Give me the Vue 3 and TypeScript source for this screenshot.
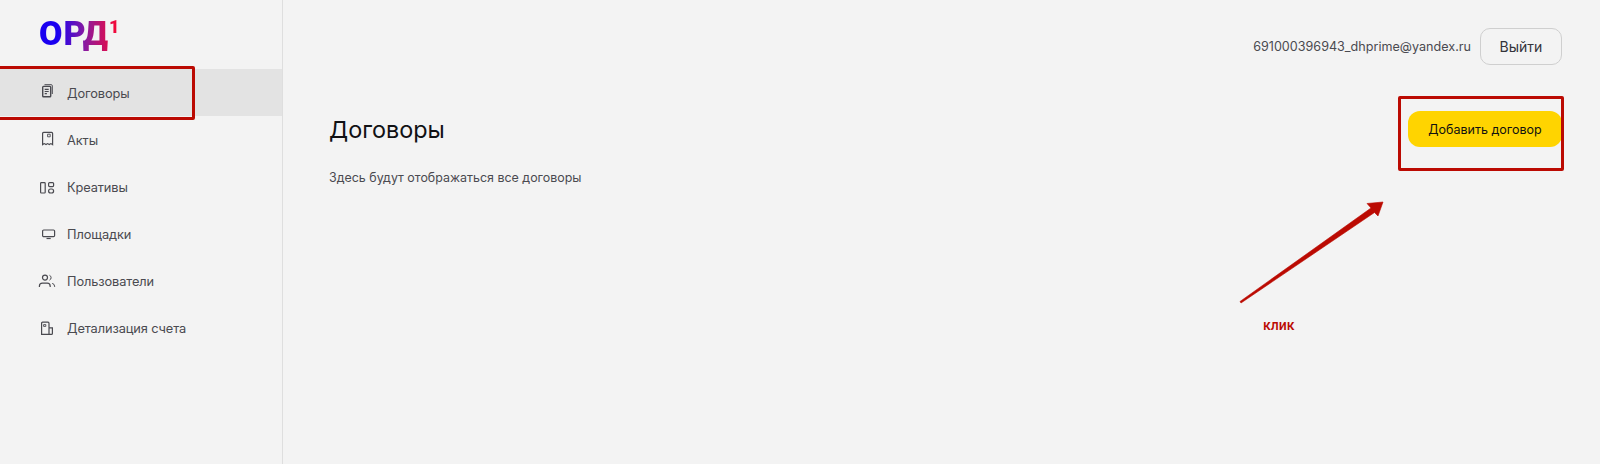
<script setup lang="ts">
type NavItem = { label: string; icon: string; active?: boolean }

const navItems: NavItem[] = [
  { label: 'Договоры', icon: 'contracts', active: true },
  { label: 'Акты', icon: 'acts' },
  { label: 'Креативы', icon: 'creatives' },
  { label: 'Площадки', icon: 'platforms' },
  { label: 'Пользователи', icon: 'users' },
  { label: 'Детализация счета', icon: 'billing' }
]
</script>

<template>
  <div class="page">
    <aside class="sidebar">
      <div class="logo">ОРД<sup class="logo-sup">1</sup></div>
      <nav class="nav">
        <a v-for="item in navItems" :key="item.label" class="nav-item" :class="{ active: item.active }">
          <svg class="nav-icon" width="18" height="18" viewBox="0 0 18 18" fill="none" stroke="currentColor" stroke-width="1.2">
            <template v-if="item.icon === 'contracts'">
              <path d="M6.5 .7h6.8a1 1 0 0 1 1 1V10" stroke-width="1" />
              <rect x="4.7" y="2.4" width="8" height="10.4" rx=".8" stroke-width="1.4" />
              <path d="M6.7 5.4h4M6.7 7.5h4M6.7 9.6h2.2" />
            </template>
            <template v-else-if="item.icon === 'acts'">
              <path d="M4.6 13.6V2.4a1 1 0 0 1 1-1h8a1 1 0 0 1 1 1v11.2l-1.7-1-1.6 1-1.7-1-1.6 1-1.7-1z" />
              <path d="M9.6 3.2h2.6v2.6H9.6z" stroke-width=".9" />
            </template>
            <template v-else-if="item.icon === 'creatives'">
              <rect x="2.6" y="4.6" width="4.6" height="10.4" rx=".8" />
              <rect x="10.6" y="4.6" width="5" height="4" rx="1" />
              <rect x="10.6" y="11" width="5" height="4" rx="2" />
            </template>
            <template v-else-if="item.icon === 'platforms'">
              <rect x="4.6" y="5" width="12" height="6.6" rx="1.1" />
              <path d="M8.5 13.5h4.2" />
            </template>
            <template v-else-if="item.icon === 'users'">
              <circle cx="7" cy="5.6" r="2.5" />
              <path d="M1.4 15v-.8A3 3 0 0 1 4.4 11.200h4.800a3 3 0 0 1 3 3v.8" />
              <path d="M11.500 3.300a2.600 2.600 0 0 1 0 4.800M14.200 11.400a3 3 0 0 1 2.400 2.800v.8" stroke-width="1" />
            </template>
            <template v-else>
              <path d="M3.600 14.400V3.200a1 1 0 0 1 1-1h5.400a1 1 0 0 1 1 1v11.200zM3.600 14.400h9.800a1 1 0 0 0 1-1V7.800H11" />
              <path d="M5.600 4.600h2.200v1.800H5.600z" stroke-width=".9" />
            </template>
          </svg>
          <span>{{ item.label }}</span>
        </a>
      </nav>
    </aside>

    <main class="main">
      <header class="topbar">
        <span class="email">691000396943_dhprime@yandex.ru</span>
        <button class="btn-logout">Выйти</button>
      </header>
      <div class="title-row">
        <h1 class="title">Договоры</h1>
        <button class="btn-add">Добавить договор</button>
      </div>
      <p class="hint">Здесь будут отображаться все договоры</p>
    </main>

    <!-- пометки поверх скриншота -->
    <div class="mark mark-nav"></div>
    <div class="mark mark-add"></div>
    <svg class="arrow" width="160" height="120" viewBox="0 0 160 120">
      <path d="M10 110.500 L141 17 L137 12.500 L153 11 L148 25 L144.500 21.500 L11 112 Z" fill="#bb0a02" stroke="#bb0a02" stroke-linejoin="round" stroke-width=".6" />
    </svg>
    <span class="click-label">клик</span>
  </div>
</template>

<style>
html,
body {
  margin: 0;
  background: #f3f3f3;
}
</style>

<style scoped>
.page {
  position: relative;
  display: flex;
  width: 1600px;
  height: 464px;
  overflow: hidden;
  background: #f3f3f3;
  font-family: Inter, "Noto Sans", sans-serif;
  color: #4a4a50;
}

.sidebar {
  width: 283px;
  flex-shrink: 0;
  box-sizing: border-box;
  border-right: 1px solid #dedede;
}

.logo {
  height: 69px;
  box-sizing: border-box;
  padding: 11px 0 0 39px;
  font-family: Roboto, sans-serif;
  font-size: 34px;
  line-height: 44px;
  font-weight: 900;
  letter-spacing: 1px;
  background: linear-gradient(90deg, #1a00f0 0%, #1a00f0 22%, #8a1aa0 55%, #f00a3c 90%);
  background-size: 84px 100%;
  background-position: 39px 0;
  background-repeat: no-repeat;
  -webkit-background-clip: text;
  background-clip: text;
  color: transparent;
}

.logo-sup {
  font-size: 18px;
  line-height: 0;
  vertical-align: 12px;
  letter-spacing: 0;
}

.nav {
  display: flex;
  flex-direction: column;
}

.nav-item {
  display: flex;
  align-items: center;
  gap: 11px;
  height: 47.1px;
  box-sizing: border-box;
  padding: 1px 0 0 38px;
  font-size: 12.8px;
  letter-spacing: -0.1px;
  color: #4a4a50;
}

.nav-item.active {
  background: #e3e3e3;
}

.nav-icon {
  flex-shrink: 0;
}

.main {
  flex: 1;
  box-sizing: border-box;
  padding: 28px 38px 0 46px;
}

.topbar {
  display: flex;
  align-items: center;
  justify-content: flex-end;
  gap: 9px;
}

.email {
  font-size: 12.6px;
}

.btn-logout {
  width: 82px;
  height: 37px;
  border: 1px solid #cfcfcf;
  border-radius: 10px;
  background: transparent;
  font: inherit;
  font-size: 14px;
  color: #33333a;
}

.title-row {
  display: flex;
  align-items: center;
  justify-content: space-between;
  margin-top: 46px;
}

.title {
  margin: 1px 0 -1px;
  font-size: 23.400px;
  line-height: 36px;
  font-weight: 400;
  color: #111114;
}

.btn-add {
  width: 154px;
  height: 36px;
  border: none;
  border-radius: 12px;
  background: #ffd400;
  font: inherit;
  font-size: 12.500px;
  color: #111;
}

.hint {
  margin: 21px 0 0;
  font-size: 12.450px;
  line-height: 20px;
}

.mark {
  position: absolute;
  box-sizing: border-box;
  border: 3px solid #bb0a02;
  border-radius: 2px;
}

.mark-nav {
  left: -4px;
  top: 66px;
  width: 199px;
  height: 54px;
}

.mark-add {
  left: 1398px;
  top: 96px;
  width: 166px;
  height: 75px;
}

.arrow {
  position: absolute;
  left: 1230px;
  top: 191px;
}

.click-label {
  position: absolute;
  left: 1263px;
  top: 317px;
  font-family: Roboto, sans-serif;
  font-size: 14px;
  line-height: 16px;
  font-weight: 500;
  color: #bb0a02;
}
</style>
